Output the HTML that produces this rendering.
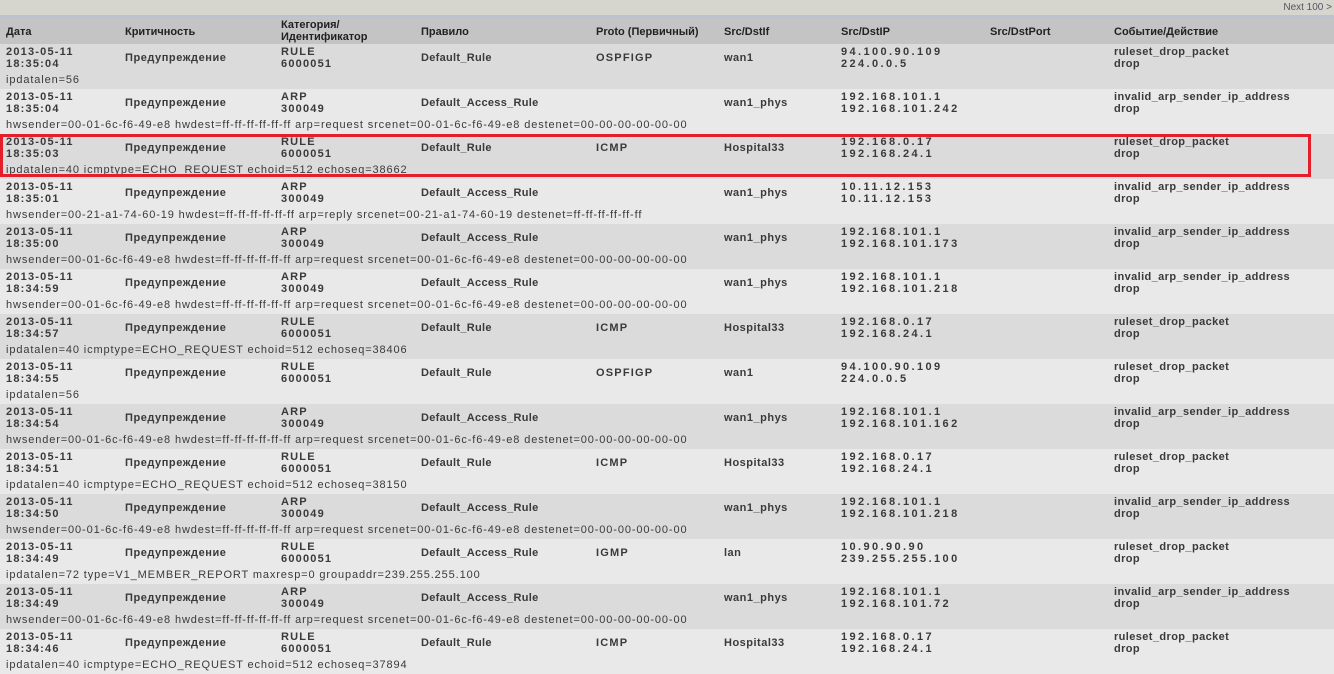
<!DOCTYPE html><html><head><meta charset="utf-8"><style>
body{margin:0;width:1334px;height:670px;overflow:hidden;background:#e9e9e9;font-family:"Liberation Sans",sans-serif;color:#3a3a3a;position:relative}
.top{position:absolute;left:0;top:0;width:1334px;height:15px;background:#d6d6cf;border-bottom:2px solid #b8c4d4}
.next{position:absolute;right:2px;top:2px;font-size:10px;color:#556}
.hdr{position:absolute;left:0;top:17px;width:1334px;height:27px;background:#c4c4c4;font-weight:bold;font-size:11px;color:#222}
.row{position:absolute;left:0;width:1334px;height:45px;font-size:11px}
.c{position:absolute;white-space:nowrap;font-weight:bold;line-height:12px}
.m{letter-spacing:1.2px}
.ip{letter-spacing:2.4px}
.d{position:absolute;left:6px;top:30px;white-space:nowrap;letter-spacing:0.88px;line-height:12px}
.box{position:absolute;left:0;top:134px;width:1305px;height:37px;border:3px solid #e41f2b}
</style></head><body>
<div class="top"><span class="next">Next 100 &gt;</span></div>
<div class="hdr">
<span class="c" style="left:6px;top:9px">Дата</span>
<span class="c" style="left:125px;top:9px">Критичность</span>
<span class="c" style="left:281px;top:2px">Категория/<br>Идентификатор</span>
<span class="c" style="left:421px;top:9px">Правило</span>
<span class="c" style="left:596px;top:9px">Proto (Первичный)</span>
<span class="c" style="left:724px;top:9px">Src/DstIf</span>
<span class="c" style="left:841px;top:9px">Src/DstIP</span>
<span class="c" style="left:990px;top:9px">Src/DstPort</span>
<span class="c" style="left:1114px;top:9px">Событие/Действие</span>
</div>
<div id="rows"></div>
<div class="box"></div>
<script>
var R=[
["18:35:04","RULE","6000051","Default_Rule","OSPFIGP","wan1","94.100.90.109","224.0.0.5","ruleset_drop_packet","ipdatalen=56"],
["18:35:04","ARP","300049","Default_Access_Rule","","wan1_phys","192.168.101.1","192.168.101.242","invalid_arp_sender_ip_address","hwsender=00-01-6c-f6-49-e8 hwdest=ff-ff-ff-ff-ff-ff arp=request srcenet=00-01-6c-f6-49-e8 destenet=00-00-00-00-00-00"],
["18:35:03","RULE","6000051","Default_Rule","ICMP","Hospital33","192.168.0.17","192.168.24.1","ruleset_drop_packet","ipdatalen=40 icmptype=ECHO_REQUEST echoid=512 echoseq=38662"],
["18:35:01","ARP","300049","Default_Access_Rule","","wan1_phys","10.11.12.153","10.11.12.153","invalid_arp_sender_ip_address","hwsender=00-21-a1-74-60-19 hwdest=ff-ff-ff-ff-ff-ff arp=reply srcenet=00-21-a1-74-60-19 destenet=ff-ff-ff-ff-ff-ff"],
["18:35:00","ARP","300049","Default_Access_Rule","","wan1_phys","192.168.101.1","192.168.101.173","invalid_arp_sender_ip_address","hwsender=00-01-6c-f6-49-e8 hwdest=ff-ff-ff-ff-ff-ff arp=request srcenet=00-01-6c-f6-49-e8 destenet=00-00-00-00-00-00"],
["18:34:59","ARP","300049","Default_Access_Rule","","wan1_phys","192.168.101.1","192.168.101.218","invalid_arp_sender_ip_address","hwsender=00-01-6c-f6-49-e8 hwdest=ff-ff-ff-ff-ff-ff arp=request srcenet=00-01-6c-f6-49-e8 destenet=00-00-00-00-00-00"],
["18:34:57","RULE","6000051","Default_Rule","ICMP","Hospital33","192.168.0.17","192.168.24.1","ruleset_drop_packet","ipdatalen=40 icmptype=ECHO_REQUEST echoid=512 echoseq=38406"],
["18:34:55","RULE","6000051","Default_Rule","OSPFIGP","wan1","94.100.90.109","224.0.0.5","ruleset_drop_packet","ipdatalen=56"],
["18:34:54","ARP","300049","Default_Access_Rule","","wan1_phys","192.168.101.1","192.168.101.162","invalid_arp_sender_ip_address","hwsender=00-01-6c-f6-49-e8 hwdest=ff-ff-ff-ff-ff-ff arp=request srcenet=00-01-6c-f6-49-e8 destenet=00-00-00-00-00-00"],
["18:34:51","RULE","6000051","Default_Rule","ICMP","Hospital33","192.168.0.17","192.168.24.1","ruleset_drop_packet","ipdatalen=40 icmptype=ECHO_REQUEST echoid=512 echoseq=38150"],
["18:34:50","ARP","300049","Default_Access_Rule","","wan1_phys","192.168.101.1","192.168.101.218","invalid_arp_sender_ip_address","hwsender=00-01-6c-f6-49-e8 hwdest=ff-ff-ff-ff-ff-ff arp=request srcenet=00-01-6c-f6-49-e8 destenet=00-00-00-00-00-00"],
["18:34:49","RULE","6000051","Default_Access_Rule","IGMP","lan","10.90.90.90","239.255.255.100","ruleset_drop_packet","ipdatalen=72 type=V1_MEMBER_REPORT maxresp=0 groupaddr=239.255.255.100"],
["18:34:49","ARP","300049","Default_Access_Rule","","wan1_phys","192.168.101.1","192.168.101.72","invalid_arp_sender_ip_address","hwsender=00-01-6c-f6-49-e8 hwdest=ff-ff-ff-ff-ff-ff arp=request srcenet=00-01-6c-f6-49-e8 destenet=00-00-00-00-00-00"],
["18:34:46","RULE","6000051","Default_Rule","ICMP","Hospital33","192.168.0.17","192.168.24.1","ruleset_drop_packet","ipdatalen=40 icmptype=ECHO_REQUEST echoid=512 echoseq=37894"]];
var h="";
R.forEach(function(r,i){
h+='<div class="row" style="top:'+(44+45*i)+'px;background:'+(i%2?'#e9e9e9':'#dcdbdc')+'">'+
'<span class="c m" style="left:6px;top:2px">2013-05-11<br>'+r[0]+'</span>'+
'<span class="c" style="left:125px;top:8px;letter-spacing:.55px">Предупреждение</span>'+
'<span class="c m" style="left:281px;top:2px">'+r[1]+'<br>'+r[2]+'</span>'+
'<span class="c" style="left:421px;top:8px;letter-spacing:.3px">'+r[3]+'</span>'+
'<span class="c m" style="left:596px;top:8px">'+r[4]+'</span>'+
'<span class="c" style="left:724px;top:8px;letter-spacing:.5px">'+r[5]+'</span>'+
'<span class="c ip" style="left:841px;top:2px">'+r[6]+'<br>'+r[7]+'</span>'+
'<span class="c" style="left:1114px;top:2px;letter-spacing:.4px">'+r[8]+'<br>drop</span>'+
'<span class="d">'+r[9]+'</span></div>';});
document.getElementById("rows").innerHTML=h;
</script>
</body></html>
